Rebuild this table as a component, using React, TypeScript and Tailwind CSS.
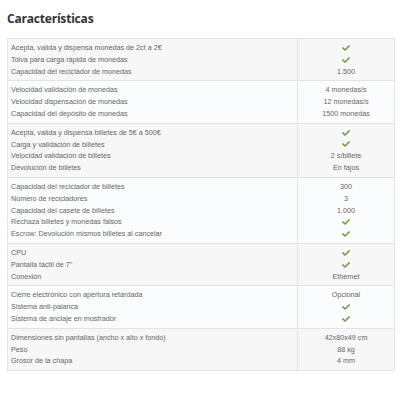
const check = "check";

type Row = [string, string];

const groups: Row[][] = [
  [
    ["Acepta, valida y dispensa monedas de 2ct a 2€", check],
    ["Tolva para carga rápida de monedas", check],
    ["Capacidad del reciclador de monedas", "1.500"],
  ],
  [
    ["Velocidad validación de monedas", "4 monedas/s"],
    ["Velocidad dispensación de monedas", "12 monedas/s"],
    ["Capacidad del depósito de monedas", "1500 monedas"],
  ],
  [
    ["Acepta, valida y dispensa billetes de 5€ a 500€", check],
    ["Carga y validación de billetes", check],
    ["Velocidad validación de billetes", "2 s/billete"],
    ["Devolución de billetes", "En fajos"],
  ],
  [
    ["Capacidad del reciclador de billetes", "300"],
    ["Número de recicladores", "3"],
    ["Capacidad del casete de billetes", "1.000"],
    ["Rechaza billetes y monedas falsos", check],
    ["Escrow: Devolución mismos billetes al cancelar", check],
  ],
  [
    ["CPU", check],
    ["Pantalla táctil de 7\"", check],
    ["Conexión", "Ethernet"],
  ],
  [
    ["Cierre electrónico con apertura retardada", "Opcional"],
    ["Sistema anti-palanca", check],
    ["Sistema de anclaje en mostrador", check],
  ],
  [
    ["Dimensiones sin pantallas (ancho x alto x fondo)", "42x80x49 cm"],
    ["Peso", "88 kg"],
    ["Grosor de la chapa", "4 mm"],
  ],
];

function Check() {
  return (
    <svg viewBox="0 0 512 512" className="w-[8px] h-[8px] fill-[#6a9a3a]">
      <path d="M173.9 439.4l-166.4-166.4c-10-10-10-26.2 0-36.2l36.2-36.2c10-10 26.2-10 36.2 0L192 312.7 432.1 72.6c10-10 26.2-10 36.2 0l36.2 36.2c10 10 10 26.2 0 36.2L210.1 439.4c-10 10-26.2 10-36.2 0z" />
    </svg>
  );
}

export default function App() {
  return (
    <div className="w-[400px] h-[400px] bg-white px-[7px] pt-[9px] font-['Liberation_Sans',Arial,sans-serif]">
      <h2 className="font-['Open_Sans',sans-serif] font-bold text-[12px] leading-[20px] text-[#333] tracking-[-0.2px]">
        Características
      </h2>
      <div className="mt-[9px] w-[388px] border border-[#e3e3e3]">
        {groups.map((rows, gi) => (
          <div
            key={gi}
            className={`flex border-[#e3e3e3] ${gi > 0 ? "border-t" : ""} ${gi % 2 === 0 ? "bg-[#f7f7f7]" : "bg-[#fbfcfd]"}`}
          >
            <div className="flex-1 px-[3px] py-[3px] text-[7.2px] leading-[11.8px] text-[#666]">
              {rows.map(([label]) => (
                <div key={label} className="h-[11.8px]">{label}</div>
              ))}
            </div>
            <div className="w-[97px] border-l border-[#e3e3e3] py-[3px] text-[7.2px] leading-[11.8px] text-[#666] text-center">
              {rows.map(([label, value]) => (
                <div key={label} className="h-[11.8px] flex items-center justify-center">
                  {value === check ? <Check /> : value}
                </div>
              ))}
            </div>
          </div>
        ))}
      </div>
    </div>
  );
}
